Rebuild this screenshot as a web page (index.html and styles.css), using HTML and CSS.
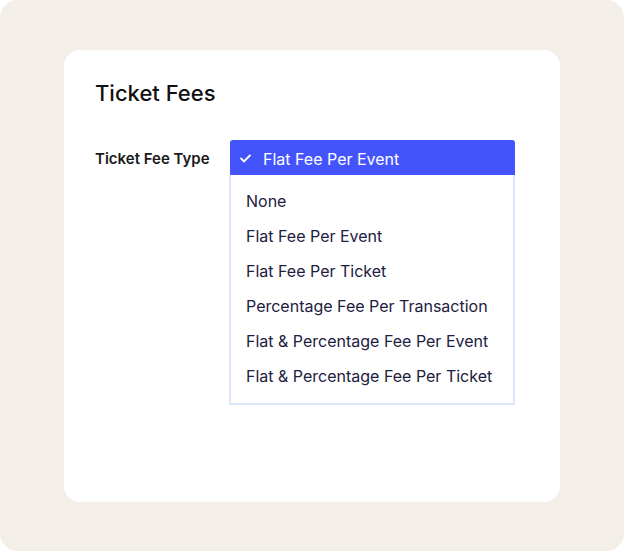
FILE: index.html
```html
<!DOCTYPE html>
<html>
<head>
<meta charset="utf-8">
<link rel="stylesheet" href="styles.css">
</head>
<body>
<div class="frame">
  <div class="card">
    <h1 class="title">Ticket Fees</h1>
    <div class="row">
      <div class="label">Ticket Fee Type</div>
      <div class="select">
        <div class="selected">
          <svg class="check" width="11" height="9" viewBox="0 0 11 9"><path d="M1.2 4.6 L4 7.3 L9.8 1.5" fill="none" stroke="#ffffff" stroke-width="1.9" stroke-linecap="square"/></svg>
          <span>Flat Fee Per Event</span>
        </div>
        <ul class="options">
          <li>None</li>
          <li>Flat Fee Per Event</li>
          <li>Flat Fee Per Ticket</li>
          <li>Percentage Fee Per Transaction</li>
          <li>Flat &amp; Percentage Fee Per Event</li>
          <li>Flat &amp; Percentage Fee Per Ticket</li>
        </ul>
      </div>
    </div>
  </div>
</div>
</body>
</html>
```
FILE: styles.css
```css
html, body { margin: 0; padding: 0; background: #ffffff; }
body { font-family: "Inter", "Liberation Sans", sans-serif; }
.frame {
  width: 624px;
  height: 551px;
  box-sizing: border-box;
  background: #f3eee8;
  border-radius: 18px;
  padding: 50px 64px 49px 64px;
}
.card {
  background: #ffffff;
  border-radius: 16px;
  height: 452px;
  box-sizing: border-box;
  padding: 28px 31px;
}
.title {
  margin: 0;
  font-size: 22px;
  font-weight: 500;
  color: #111111;
  line-height: 30px;
}
.row {
  display: flex;
  margin-top: 32px;
}
.label {
  width: 135px;
  font-size: 15px;
  font-weight: 600;
  color: #1a1a1a;
  line-height: 20px;
  padding-top: 9px;
}
.select { width: 285px; }
.selected {
  height: 35px;
  background: #4454fd;
  border-radius: 3px 3px 0 0;
  color: #ffffff;
  display: flex;
  align-items: center;
  font-size: 16px;
  padding-left: 10px;
  padding-top: 2px;
  box-sizing: border-box;
}
.check { width: 11px; height: 9px; margin-right: 12px; margin-top: -1px; }
.options {
  list-style: none;
  margin: 0;
  padding: 9px 0 9px 0;
  border: 2px solid #dbe6fa;
  border-top: none;
  box-sizing: border-box;
  margin-left: -1px;
}
.options li {
  height: 35px;
  line-height: 35px;
  padding-left: 15px;
  font-size: 16px;
  color: #1d2040;
}
```
